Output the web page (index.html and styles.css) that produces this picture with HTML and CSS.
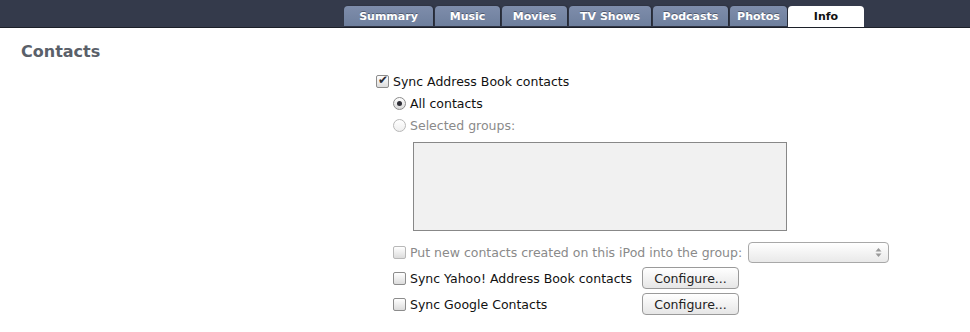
FILE: index.html
```html
<!DOCTYPE html>
<html lang="en">
  <head>
    <meta charset="UTF-8" />
    <title>Info - Contacts</title>
    <link rel="stylesheet" href="styles.css">
  </head>
  <body>
    <div class="topbar">
      <div class="tabs">
        <span class="tab t-summary">Summary</span>
        <span class="tab t-music">Music</span>
        <span class="tab t-movies">Movies</span>
        <span class="tab t-tv">TV Shows</span>
        <span class="tab t-podcasts">Podcasts</span>
        <span class="tab t-photos">Photos</span>
        <span class="tab t-info active">Info</span>
      </div>
    </div>

    <h2 class="section_title">Contacts</h2>

    <div class="options">
      <div class="row">
        <span class="check checked"></span>
        <span class="label">Sync Address Book contacts</span>
      </div>

      <div class="sub">
        <div class="row">
          <span class="radio selected"></span>
          <span class="label">All contacts</span>
        </div>
        <div class="row disabled">
          <span class="radio"></span>
          <span class="label">Selected groups:</span>
        </div>

        <div class="group_list"></div>

        <div class="row tall disabled">
          <span class="check"></span>
          <span class="label">Put new contacts created on this iPod into the group:</span>
          <span class="popup">
            <svg width="7" height="11" viewBox="0 0 7 11">
              <path d="M3.5 1 L6.5 4.5 L0.5 4.5 Z" fill="#999" />
              <path d="M3.5 10 L6.5 6.5 L0.5 6.5 Z" fill="#999" />
            </svg>
          </span>
        </div>

        <div class="row tall">
          <span class="check"></span>
          <span class="label wide">Sync Yahoo! Address Book contacts</span>
          <button class="btn">Configure...</button>
        </div>
        <div class="row tall">
          <span class="check"></span>
          <span class="label wide">Sync Google Contacts</span>
          <button class="btn">Configure...</button>
        </div>
      </div>
    </div>
  </body>
</html>
```

FILE: styles.css
```css
body {
  margin: 0;
  background: #ffffff;
  font-family: "DejaVu Sans", Verdana, sans-serif;
  font-size: 12.5px;
  color: #111111;
}

.topbar {
  height: 27px;
  background: #343a4b;
  border-bottom: 1px solid #1c2029;
  display: flex;
  align-items: flex-end;
}

.tabs {
  display: flex;
  padding-left: 344px;
  gap: 2px;
}

.tab {
  height: 20px;
  line-height: 22px;
  background: linear-gradient(#7e8dab, #6e7f9d);
  color: #ffffff;
  font-weight: bold;
  font-size: 11px;
  text-align: center;
  border-radius: 4px 4px 0 0;
  text-shadow: 0 -1px 0 rgba(0, 0, 0, 0.35);
  box-shadow: 1px 0 2px rgba(0, 0, 0, 0.35);
}

.t-summary { width: 89px; }
.t-music { width: 65px; }
.t-movies { width: 65px; }
.t-tv { width: 82px; }
.t-podcasts { width: 75px; }
.t-photos { width: 57px; }
.t-info { width: 76px; margin-left: -1px; }

.tab.active {
  background: #ffffff;
  color: #111111;
  text-shadow: none;
  box-shadow: none;
  height: 21px;
}

.section_title {
  margin: 14px 0 0 21px;
  font-size: 16px;
  font-weight: bold;
  color: #5a6069;
  height: 21px;
}

.options {
  margin-left: 376px;
  margin-top: 7px;
}

.sub {
  margin-left: 17px;
}

.row {
  display: flex;
  align-items: center;
  height: 22px;
  gap: 4px;
}

.row.tall {
  height: 26px;
}

.row.disabled .label {
  color: #8a8a8a;
}

.check {
  width: 11px;
  height: 11px;
  border: 1px solid #8c8c8c;
  border-radius: 2px;
  background: linear-gradient(#ffffff, #dcdcdc);
  position: relative;
}

.row.disabled .check {
  border-color: #b8b8b8;
}

.check.checked::after {
  content: "\2714";
  position: absolute;
  left: 1px;
  top: -3px;
  font-size: 12px;
  color: #2b2b33;
}

.radio {
  width: 11px;
  height: 11px;
  border: 1px solid #8c8c8c;
  border-radius: 50%;
  background: linear-gradient(#ffffff, #d8d8d8);
  display: flex;
  align-items: center;
  justify-content: center;
}

.row.disabled .radio {
  border-color: #b8b8b8;
  background: linear-gradient(#ffffff, #eeeeee);
}

.radio.selected::after {
  content: "";
  width: 5px;
  height: 5px;
  border-radius: 50%;
  background: #2e2e36;
}

.label.wide {
  width: 228px;
}

.group_list {
  margin: 6px 0 8px 20px;
  width: 372px;
  height: 87px;
  border: 1px solid #888888;
  background: #f1f1f1;
}

.popup {
  margin-left: 2px;
  width: 141px;
  height: 21px;
  border: 1px solid #a8a8a8;
  border-radius: 4px;
  background: linear-gradient(#ffffff, #e9e9e9);
  display: flex;
  align-items: center;
  justify-content: flex-end;
  padding-right: 6px;
  box-sizing: border-box;
}

.btn {
  height: 22px;
  width: 97px;
  font-family: "DejaVu Sans", Verdana, sans-serif;
  font-size: 12.5px;
  color: #222222;
  border: 1px solid #9a9a9a;
  border-radius: 4px;
  background: linear-gradient(#ffffff, #e6e6e6);
  padding: 0;
}
```
